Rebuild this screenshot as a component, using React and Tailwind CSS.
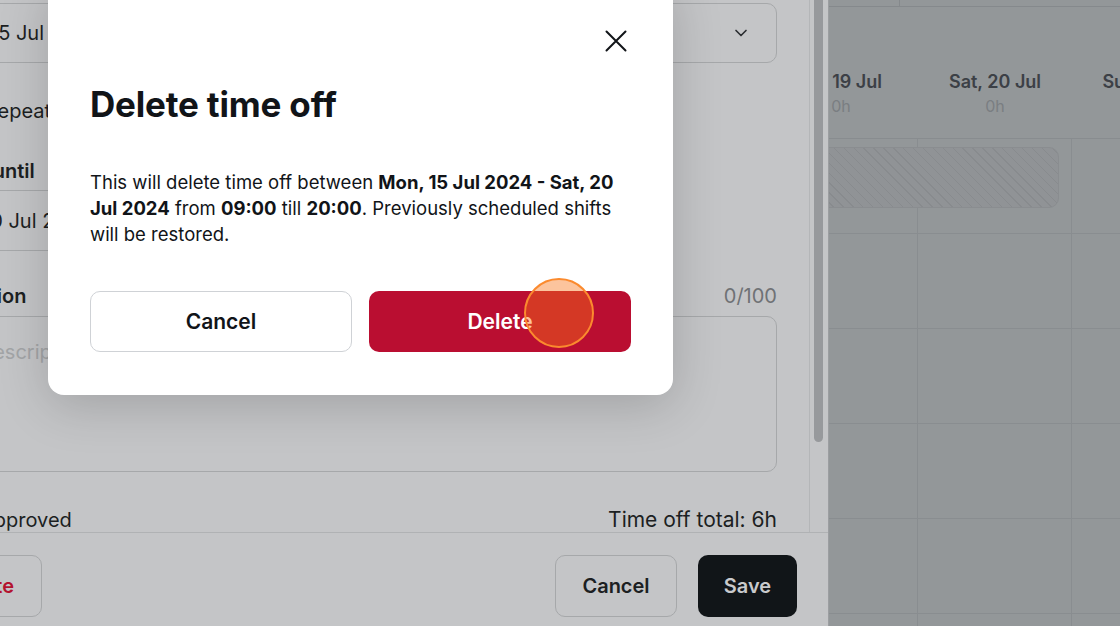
import React from 'react';

const Chevron = () => (
  <svg width="20" height="20" viewBox="0 0 24 24" fill="none" stroke="#2a2d30" strokeWidth="2" strokeLinecap="round" strokeLinejoin="round">
    <path d="m6 9 6 6 6-6" />
  </svg>
);

const CloseIcon = () => (
  <svg width="22" height="22" viewBox="0 0 22 22" fill="none" stroke="#111418" strokeWidth="2" strokeLinecap="round">
    <path d="M1.5 1.5 20.5 20.5M20.5 1.5 1.5 20.5" />
  </svg>
);

const days = [
  { label: 'Fri, 19 Jul', hours: '0h' },
  { label: 'Sat, 20 Jul', hours: '0h' },
  { label: 'Sun, 21 Jul', hours: '0h' },
];

const App = () => {
  return (
    <div className="relative flex w-[1120px] h-[626px] overflow-hidden font-[Inter,sans-serif] text-[#1c1f22]">
      {/* Side panel (dimmed) */}
      <div className="flex flex-col w-[829px] shrink-0 bg-[#c4c5c7] border-r border-[#9c9ea1]">
        <div className="flex flex-1 min-h-0">
          <div className="flex-1 min-w-0 overflow-hidden">
            <div className="ml-[-80px] pr-[32px] pt-[3px] flex flex-col">
              <div className="grid grid-cols-2 gap-4">
                <div className="h-[60px] rounded-[10px] border-[1.5px] border-[#a6a8aa] flex items-center pl-[69px] text-[20px]">
                  15 Jul 2024
                </div>
                <div className="h-[60px] rounded-[10px] border-[1.5px] border-[#a6a8aa] flex items-center justify-between pl-4 pr-[25px] text-[20px]">
                  <span>09:00 - 20:00</span>
                  <Chevron />
                </div>
              </div>

              <div className="mt-[34px] flex items-center gap-3 h-[28px] text-[20px]">
                <div className="w-[42px] h-[24px] rounded-full bg-[#a6a8aa] ml-[10px]" />
                <span className="ml-[1px]">Repeat</span>
              </div>

              <div className="mt-[32px] h-[28px] leading-[28px] text-[20px] font-semibold">Repeat until</div>
              <div className="mt-[5px] w-1/2 h-[61px] rounded-[10px] border-[1.5px] border-[#a6a8aa] flex items-center pl-[57px] text-[20px]">
                20 Jul 2024
              </div>

              <div className="mt-[31px] flex items-center justify-between h-[28px] text-[20px]">
                <span className="font-semibold ml-[-5px]">Description</span>
                <span className="text-[#6f7275]">0/100</span>
              </div>
              <div className="mt-[6px] h-[156px] rounded-[10px] border-[1.5px] border-[#a6a8aa] pl-4 pt-[20px] text-[20px] text-[#a2a4a6]">
                Add description
              </div>

              <div className="mt-[34px] flex items-center justify-between h-[28px] text-[20px]">
                <span className="ml-[60px]">Approved</span>
                <span className="text-[21px]">Time off total: 6h</span>
              </div>
            </div>
          </div>
          {/* scrollbar */}
          <div className="w-[19px] shrink-0 border-l border-[#b4b6b8] pl-[4px]">
            <div className="w-[9px] h-[442px] rounded-b-full bg-[#97999c]" />
          </div>
        </div>

        {/* footer */}
        <div className="h-[94px] shrink-0 border-t border-[#b0b2b4] flex items-start justify-between pt-[22px] pr-[31px]">
          <button className="ml-[-76px] h-[62px] w-[118px] rounded-[10px] border-[1.5px] border-[#a6a8aa] text-[20px] font-semibold text-[#b3132f]">
            Delete
          </button>
          <div className="flex gap-[21px]">
            <button className="h-[62px] w-[122px] rounded-[10px] border-[1.5px] border-[#a6a8aa] text-[20px] font-semibold text-[#1c1f22]">
              Cancel
            </button>
            <button className="h-[62px] w-[99px] rounded-[10px] bg-[#111518] text-[20px] font-semibold text-[#c9cacc]">
              Save
            </button>
          </div>
        </div>
      </div>

      {/* Calendar (dimmed) */}
      <div className="flex-1 min-w-0 bg-[#939799] overflow-hidden flex flex-col">
        <div className="h-[7px] shrink-0 border-b border-[#85898c] flex">
          <div className="w-[71px] border-r border-[#85898c]" />
        </div>
        <div className="ml-[-65px] flex flex-col">
          <div className="h-[132px] border-b border-[#888c8f] grid grid-cols-[154px_154px_154px]">
            {days.map((d) => (
              <div key={d.label} className="flex flex-col items-center pt-[63px]">
                <span className="text-[18px] leading-[24px] font-semibold text-[#3c4046]">{d.label}</span>
                <span className="mt-[2px] text-[16px] leading-[20px] text-[#7a7e82]">{d.hours}</span>
              </div>
            ))}
          </div>
          {[0, 1, 2, 3, 4, 5].map((r) => (
            <div key={r} className="relative h-[95px] border-b border-[#898d90] grid grid-cols-[154px_154px_154px]">
              <div className="border-r border-[#898d90]" />
              <div className="border-r border-[#898d90]" />
              <div className="border-r border-[#898d90]" />
              {r === 0 && (
                <div className="absolute left-0 top-[8px] w-[295px] h-[61px] rounded-r-[10px] border border-[#8a8d90] bg-[#909396] bg-[repeating-linear-gradient(45deg,transparent_0px,transparent_6px,#888b8e_6px,#888b8e_7px)]" />
              )}
            </div>
          ))}
        </div>
      </div>

      {/* Confirm modal */}
      <div className="absolute left-[48px] top-[-20px] w-[625px] bg-white rounded-2xl shadow-[0_10px_50px_rgba(0,0,0,0.18)] px-[42px] pb-[43px] text-[#111418]">
        <div className="pt-[50px] flex justify-end mr-[4px]">
          <CloseIcon />
        </div>
        <h2 className="mt-[32px] text-[35px] leading-[40px] font-bold tracking-[-0.005em]">Delete time off</h2>
        <p className="mt-[45px] max-w-[530px] text-[18.5px] leading-[26px]">
          This will delete time off between <b className="font-bold">Mon, 15 Jul 2024 - Sat, 20 Jul 2024</b> from{' '}
          <b className="font-bold">09:00</b> till <b className="font-bold">20:00</b>. Previously scheduled shifts will be restored.
        </p>
        <div className="mt-[44px] grid grid-cols-2 gap-[17px]">
          <button className="h-[61px] rounded-[10px] border border-[#cfd2d6] bg-white text-[21px] font-semibold text-[#111418]">
            Cancel
          </button>
          <button className="h-[61px] rounded-[10px] bg-[#ba0e31] text-[21px] font-semibold text-white">
            Delete
          </button>
        </div>
      </div>

      {/* click indicator */}
      <div className="absolute left-[524px] top-[278px] w-[70px] h-[70px] rounded-full border-2 border-[#fb8a2e] bg-[rgba(249,115,22,0.42)]" />
    </div>
  );
};

export default App;
